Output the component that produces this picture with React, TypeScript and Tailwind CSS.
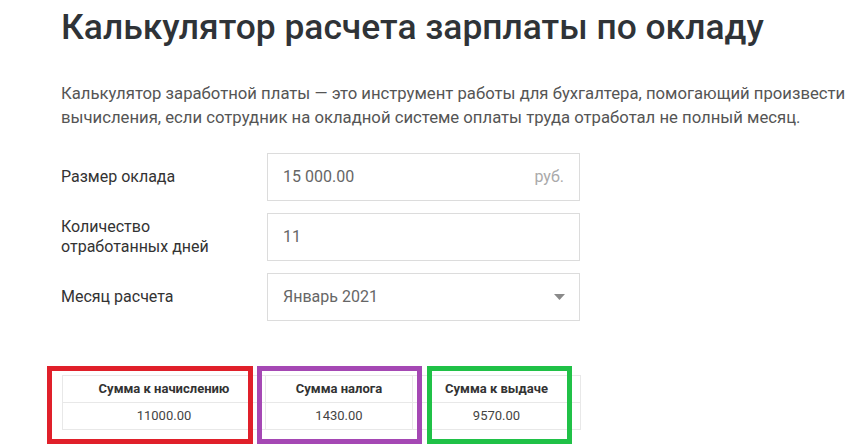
const rows = [
  { label: "Размер оклада", value: "15 000.00", suffix: "руб." },
];

export default function App() {
  return (
    <div className="relative min-h-[446px] overflow-hidden bg-white font-['Roboto',sans-serif]">
      <div className="pl-[61px] pt-[7px]">
        <h1 className="text-[35.4px] leading-[40px] font-medium text-[#2f3337]">
          Калькулятор расчета зарплаты по окладу
        </h1>
        <p className="mt-[35px] w-[790px] text-[16.7px] leading-[24px] text-[#555]">
          Калькулятор заработной платы — это инструмент работы для бухгалтера, помогающий произвести
          вычисления, если сотрудник на окладной системе оплаты труда отработал не полный месяц.
        </p>

        <div className="mt-[23px] flex flex-col gap-[12px]">
          {rows.map((r) => (
            <div key={r.label} className="flex items-center">
              <div className="w-[206px] text-[16px] leading-[20px] text-[#333]">{r.label}</div>
              <div className="flex h-[48px] w-[313px] items-center justify-between border border-[#dcdcdc] px-[15px] text-[16px]">
                <span className="text-[#666]">{r.value}</span>
                <span className="text-[#aaa]">{r.suffix}</span>
              </div>
            </div>
          ))}
          <div className="flex items-center">
            <div className="w-[206px] text-[16px] leading-[20px] text-[#333]">
              Количество
              <br />
              отработанных дней
            </div>
            <div className="flex h-[48px] w-[313px] items-center border border-[#dcdcdc] px-[15px] text-[16px] text-[#666]">
              11
            </div>
          </div>
          <div className="flex items-center">
            <div className="w-[206px] text-[16px] leading-[20px] text-[#333]">Месяц расчета</div>
            <div className="flex h-[48px] w-[313px] items-center justify-between border border-[#dcdcdc] pl-[15px] pr-[14px] text-[16px] text-[#666]">
              <span>Январь 2021</span>
              <svg width="11" height="6" viewBox="0 0 11 6">
                <path d="M0 0h11L5.5 6z" fill="#8a8a8a" />
              </svg>
            </div>
          </div>
        </div>

        <table className="mt-[54px] ml-[1px] border-collapse text-[13px] text-[#333]">
          <thead>
            <tr>
              <th className="h-[27px] w-[203px] border border-[#e8e8e8] text-center font-bold">Сумма к начислению</th>
              <th className="h-[27px] w-[147px] border border-[#e8e8e8] text-center font-bold">Сумма налога</th>
              <th className="h-[27px] w-[168px] border border-[#e8e8e8] text-center font-bold">Сумма к выдаче</th>
            </tr>
          </thead>
          <tbody>
            <tr className="text-[#444]">
              <td className="h-[27px] border border-[#e8e8e8] text-center">11000.00</td>
              <td className="h-[27px] border border-[#e8e8e8] text-center">1430.00</td>
              <td className="h-[27px] border border-[#e8e8e8] text-center">9570.00</td>
            </tr>
          </tbody>
        </table>
      </div>

      {/* annotation frames */}
      <div className="absolute left-[47px] top-[366px] h-[78px] w-[206px] border-[5px] border-[#e0202a]" />
      <div className="absolute left-[257px] top-[366px] h-[78px] w-[165px] border-[5px] border-[#a548b4]" />
      <div className="absolute left-[427px] top-[366px] h-[78px] w-[145px] border-[5px] border-[#20c147]" />
    </div>
  );
}
